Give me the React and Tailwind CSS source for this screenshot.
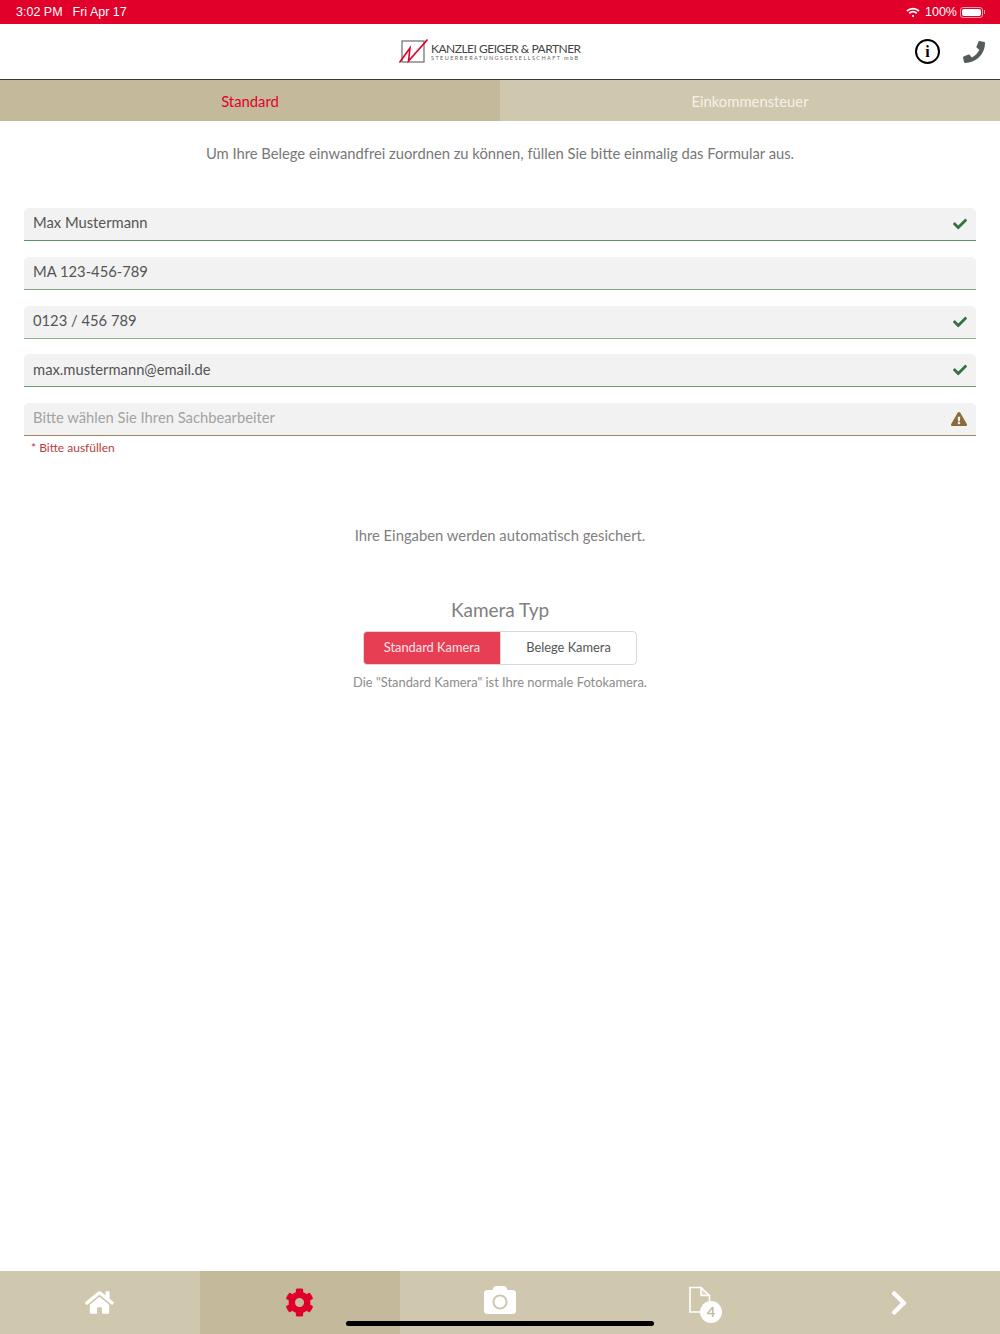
import React from 'react';
import { FaCamera, FaCheck, FaChevronRight, FaCog, FaExclamationTriangle, FaHome, FaPhone } from 'react-icons/fa';

const fields = [
  { value: 'Max Mustermann', icon: 'check', line: 'border-[#5b9464]' },
  { value: 'MA 123-456-789', icon: null, line: 'border-[#7fa585]' },
  { value: '0123 / 456 789', icon: 'check', line: 'border-[#8ab08f]' },
  { value: 'max.mustermann@email.de', icon: 'check', line: 'border-[#6f9f76]' },
];

const FormField = ({ value, icon, line, placeholder }) => (
  <div className={`flex h-[33px] items-center justify-between rounded-t-[5px] border-b-[1.5px] bg-[#f2f2f2] pb-[3px] pl-[9px] pr-[9px] ${line}`}>
    <span className={`text-[14.75px] ${placeholder ? 'text-[#a3a3a3]' : 'text-[#555555]'}`}>{value}</span>
    {icon === 'check' && <FaCheck className="mt-[3px] text-[14px] text-[#35713f]" />}
    {icon === 'warn' && <FaExclamationTriangle className="mt-[3px] text-[16px] text-[#8b6b3c]" />}
  </div>
);

const NavItem = ({ active, children }) => (
  <div className={`flex h-full w-1/5 items-center justify-center ${active ? 'bg-[#c4b99b]' : ''}`}>{children}</div>
);

const App = () => {
  return (
    <div className="relative flex h-[1334px] w-[1000px] flex-col overflow-hidden bg-white font-['Lato',sans-serif]">
      {/* statusbar */}
      <div className="flex h-[24px] items-center justify-between bg-[#e0002a] pl-[16px] pr-[15px] font-['Liberation_Sans',sans-serif] text-[12.5px] text-white">
        <div className="flex gap-[10px]">
          <span>3:02 PM</span>
          <span>Fri Apr 17</span>
        </div>
        <div className="flex items-center">
          <svg className="mr-[5px]" width="14" height="11" viewBox="0 0 14 11" fill="none" stroke="white" strokeWidth="1.8">
            <path d="M1 4 C4.5 0.8 9.5 0.8 13 4" />
            <path d="M3.3 6.2 C5.5 4.4 8.5 4.4 10.7 6.2" />
            <circle cx="7" cy="9" r="1.1" fill="white" stroke="none" />
          </svg>
          <span className="mr-[3px]">100%</span>
          <div className="flex items-center gap-[1px]">
            <div className="h-[11px] w-[23px] rounded-[3px] border border-white/60 p-[1px]">
              <div className="h-full w-full rounded-[2px] bg-white" />
            </div>
            <div className="h-[4px] w-[1px] bg-white/60" />
          </div>
        </div>
      </div>

      {/* header */}
      <header className="relative flex h-[56px] items-center justify-center border-b border-[#3a3a3a]">
        <div className="mr-[20px] flex items-center gap-[3px]">
          <svg width="29" height="25" viewBox="0 0 29 25" fill="none">
            <rect x="3" y="2" width="22" height="21" stroke="#777777" strokeWidth="1.3" />
            <path d="M0.5 23.5 L11 9 L9.5 22 L28.5 0.5" stroke="#e0002a" strokeWidth="1.6" />
          </svg>
          <div className="flex w-[150px] flex-col pt-[1px]">
            <span className="whitespace-nowrap text-[12px] leading-[13px] tracking-[-0.5px] text-[#444444]">KANZLEI GEIGER &amp; PARTNER</span>
            <span className="whitespace-nowrap text-[5.5px] leading-[7px] tracking-[1.42px] text-[#666666]">STEUERBERATUNGSGESELLSCHAFT mbB</span>
          </div>
        </div>
        <div className="absolute right-[15px] top-[15px] flex items-center gap-[23px]">
          <div className="flex h-[25px] w-[25px] items-center justify-center rounded-full border-2 border-black font-['Liberation_Serif',serif] text-[16px] font-bold leading-none text-black">i</div>
          <FaPhone className="text-[22px] text-[#555d5a]" />
        </div>
      </header>

      {/* tabs */}
      <div className="flex h-[41px] text-[14.8px]">
        <div className="flex w-1/2 items-center justify-center bg-[#c4b99b] pt-[1px] text-[#e0002a]">Standard</div>
        <div className="flex w-1/2 items-center justify-center bg-[#cfc7ae] pt-[1px] text-[#f4f1e8]">Einkommensteuer</div>
      </div>

      <main className="flex-1">
        <p className="mt-[22px] text-center text-[14.75px] leading-[20px] text-[#777777]">
          Um Ihre Belege einwandfrei zuordnen zu können, füllen Sie bitte einmalig das Formular aus.
        </p>

        <div className="mx-[24px] mt-[45px] flex flex-col gap-[15.75px]">
          {fields.map((f) => (
            <FormField key={f.value} value={f.value} icon={f.icon} line={f.line} />
          ))}
          <div>
            <FormField value="Bitte wählen Sie Ihren Sachbearbeiter" icon="warn" line="border-[#9c8458]" placeholder />
            <p className="ml-[7px] mt-[3px] text-[12px] leading-[18px] text-[#b83c40]">* Bitte ausfüllen</p>
          </div>
        </div>

        <p className="mt-[68px] text-center text-[14.8px] leading-[20px] text-[#808080]">Ihre Eingaben werden automatisch gesichert.</p>

        <div className="mt-[52px] flex flex-col items-center">
          <h2 className="text-[19px] font-normal leading-[26px] text-[#808080]">Kamera Typ</h2>
          <div className="mt-[8px] flex h-[34px] w-[274px] rounded-[4px] border-[1.5px] border-[#d8d8d8] text-[12.85px]">
            <div className="flex w-[136px] items-center justify-center rounded-l-[3px] bg-[#e83e54] pb-[1px] text-[#fbe4e7]">Standard Kamera</div>
            <div className="flex flex-1 items-center justify-center border-l-[1.5px] border-[#d8d8d8] pb-[1px] text-[#555555]">Belege Kamera</div>
          </div>
          <p className="mt-[8px] text-[12.9px] leading-[18px] text-[#8c8c8c]">Die "Standard Kamera" ist Ihre normale Fotokamera.</p>
        </div>
      </main>

      {/* bottom nav */}
      <nav className="flex h-[63px] bg-[#cfc7ae] text-white">
        <NavItem><FaHome className="mr-[1px] text-[29px]" /></NavItem>
        <NavItem active><FaCog className="mr-[2px] text-[29px] text-[#e0002a]" /></NavItem>
        <NavItem><FaCamera className="mb-[5px] text-[32px]" /></NavItem>
        <NavItem>
          <div className="relative ml-[10px] h-[34px] w-[34px]">
            <svg className="absolute left-0 top-0" width="24" height="28" viewBox="0 0 24 28" fill="none" stroke="white" strokeWidth="1.6">
              <path d="M2 1.5 H13 L21.5 9.5 V26 H2 Z" />
              <path d="M13 1.5 V9.5 H21.5" fill="white" fillOpacity="0.35" />
            </svg>
            <div className="absolute bottom-[-3px] right-0 flex h-[22px] w-[22px] items-center justify-center rounded-full bg-white text-[14px] font-bold text-[#c4b99b]">4</div>
          </div>
        </NavItem>
        <NavItem><FaChevronRight className="mr-[3px] text-[28px]" /></NavItem>
      </nav>

      {/* home indicator */}
      <div className="absolute bottom-[8px] left-[346px] h-[5px] w-[308px] rounded-full bg-black" />
    </div>
  );
};

export default App;
